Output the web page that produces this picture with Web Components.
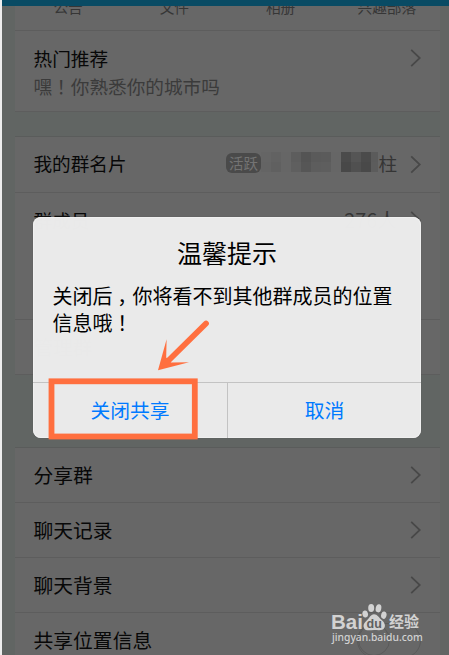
<!DOCTYPE html>
<html lang="zh-CN">
<head>
<meta charset="UTF-8">
<title>群资料</title>
<style>
  * { box-sizing: border-box; }
  body {
    margin: 0;
    width: 449px;
    height: 655px;
    overflow: hidden;
    background: #ededed;
    font-family: "Noto Sans CJK SC", "Liberation Sans", sans-serif;
    color: #080808;
  }
</style>
</head>
<body>
<group-settings>
  <tab-strip></tab-strip>
  <list-row style="--h: 81px; --size: 18.65px; --shift: 0.5px" arrow="-13">热门推荐
    <span slot="sub">嘿<mid-mark>！</mid-mark>你熟悉你的城市吗</span>
  </list-row>
  <list-gap style="--h: 25px"></list-gap>
  <list-row style="--h: 56px; --size: 18.6px; --shift: -2px" arrow="-0.5">我的群名片
    <name-tag slot="value"></name-tag>
  </list-row>
  <list-row style="--h: 127px; --size: 18.6px; --shift: -36px" arrow="-36">群成员
    <span slot="value" style="font-size: 19.8px">276人</span>
  </list-row>
  <list-row style="--h: 55px; --size: 19.7px">管理群</list-row>
  <list-gap style="--h: 73px"></list-gap>
  <list-row style="--h: 55px; --size: 19.8px" arrow="0">分享群</list-row>
  <list-row style="--h: 55px; --size: 19.8px" arrow="0">聊天记录</list-row>
  <list-row style="--h: 55px; --size: 19.8px" arrow="0">聊天背景</list-row>
  <list-row style="--h: 55px; --size: 19.8px">共享位置信息
    <toggle-switch slot="value"></toggle-switch>
  </list-row>
</group-settings>

<alert-dialog>
  <span slot="title">温馨提示</span>
  关闭后<mid-mark>，</mid-mark>你将看不到其他群成员的位置信息哦<mid-mark>！</mid-mark>
  <span slot="ok">关闭共享</span>
  <span slot="cancel">取消</span>
</alert-dialog>
<marker-arrow></marker-arrow>
<site-watermark></site-watermark>

<script>
// Small helper: every element gets an open root with its own markup
function define(name, html, setup) {
  customElements.define(name, class extends HTMLElement {
    connectedCallback() {
      if (this.shadowRoot) return;
      this.attachShadow({ mode: 'open' });
      this.shadowRoot.innerHTML = html.trim();
      if (setup) setup(this, this.shadowRoot);
    }
  });
}

// Punctuation centred in its full-width cell
define('mid-mark', `
  <style>:host { display: inline-block; width: 1em; text-indent: .24em; white-space: nowrap; line-height: 1; }</style><slot></slot>
`);

define('group-settings', `
  <style>
    :host {
      display: block;
      height: 655px;
      margin-left: 2px;
      overflow: hidden;
      background: #616563;
    }
    .bar { height: 6px; background: #094b64; }
    .list { width: 425px; margin-left: 13px; }
  </style>
  <div class="bar"></div>
  <div class="list"><slot></slot></div>
`);

define('tab-strip', `
  <style>
    :host {
      display: grid;
      grid-template-columns: repeat(4, 1fr);
      align-content: end;
      box-sizing: border-box;
      height: 25px;
      padding-bottom: 14px;
      overflow: hidden;
      text-align: center;
      font-size: 14.7px;
      line-height: 18px;
      color: #363636;
      background: #676767;
      border-bottom: 1px solid #5d5d5d;
    }
  </style>
  <span>公告</span><span>文件</span><span>相册</span><span>兴趣部落</span>
`);

define('list-gap', `
  <style>
    :host {
      display: block;
      box-sizing: border-box;
      height: var(--h);
      border-bottom: 1px solid #5a5c5b;
    }
  </style>
`);

define('list-row', `
  <style>
    :host {
      display: flex;
      align-items: center;
      box-sizing: border-box;
      height: var(--h);
      padding: 0 19px 0 18.5px;
      background: #676767;
      border-bottom: 1px solid #5d5d5d;
      font-size: var(--size);
      line-height: 28px;
    }
    .text { flex: 1; transform: translateY(var(--shift, 0)); white-space: nowrap; }
    .sub { display: block; color: #3b3b3b; }
    .value { color: #353535; margin-right: 13px; transform: translateY(var(--shift, 0)); }
    svg { width: 11px; height: 18px; fill: none; stroke: #484848; stroke-width: 1.8; }
  </style>
  <div class="text"><slot></slot><div class="sub"><slot name="sub"></slot></div></div>
  <div class="value"><slot name="value"></slot></div>
  <svg viewBox="0 0 11 18"><path d="M1.2 .8 9.8 9 1.2 17.2"/></svg>
`, (el, root) => {
  const arrow = root.querySelector('svg');
  if (el.hasAttribute('arrow')) {
    arrow.style.transform = `translateY(${el.getAttribute('arrow')}px)`;
  } else {
    arrow.remove();
    root.querySelector('.value').style.marginRight = 0;
  }
});

define('name-tag', `
  <style>
    :host { display: flex; align-items: center; }
    .badge {
      width: 35px;
      height: 20px;
      border-radius: 6px;
      background: #4a4a4a;
      color: #737373;
      font-size: 14.5px;
      line-height: 19px;
      text-align: center;
    }
    .mosaic { display: grid; grid-template-columns: repeat(11, 10px) 7px; height: 20px; margin: -2px 0 0 .5px; }
  </style>
  <span class="badge">活跃</span>
  <span class="mosaic"></span>
  <span>柱</span>
`, (el, root) => {
  const tones = [
    '#656565 #626262 #666666 #5d5d5d #545454 #5a5a5a #5b5b5b #666666 #4b4b4b #555555 #4b4b4b #5b5b5b',
    '#646464 #606060 #666666 #5f5f5f #565656 #5d5d5d #5e5e5e #666666 #484848 #505050 #494949 #5c5c5c'
  ].join(' ').split(' ');
  root.querySelector('.mosaic').innerHTML =
    tones.map(t => `<i style="background:${t}"></i>`).join('');
});

define('toggle-switch', `
  <style>
    :host {
      display: block;
      box-sizing: border-box;
      width: 64px;
      height: 35px;
      border: 1.5px solid #5a5a5a;
      border-radius: 18px;
    }
    i { display: block; width: 32px; height: 32px; border: 1.5px solid #5a5a5a; border-radius: 50%; box-sizing: border-box; }
  </style>
  <i></i>
`);

define('alert-dialog', `
  <style>
    :host {
      position: absolute;
      left: 33px;
      top: 217px;
      width: 388px;
      height: 221px;
      box-sizing: border-box;
      display: flex;
      flex-direction: column;
      border-radius: 8px;
      background: rgba(236, 236, 236, .99);
      box-shadow: inset 0 0 0 1px #f0f0f0, 0 0 1px #555;
      color: #000;
    }
    .title { padding-top: 18px; text-align: center; font-size: 25px; line-height: 34px; }
    .body { flex: 1; padding: 13px 14px 0 19.5px; font-size: 20px; line-height: 27px; }
    .buttons {
      display: grid;
      grid-template-columns: 194px 1fr;
      height: 56px;
      border-top: 1px solid #c3c3c3;
      box-sizing: border-box;
      color: #007aff;
      font-size: 19.8px;
      line-height: 54px;
      text-align: center;
    }
    .buttons div + div { border-left: 1px solid #c3c3c3; }
  </style>
  <div class="title"><slot name="title"></slot></div>
  <div class="body"><slot></slot></div>
  <div class="buttons">
    <div><slot name="ok"></slot></div>
    <div><slot name="cancel"></slot></div>
  </div>
`);

// Orange frame and arrow pointing at the left button
define('marker-arrow', `
  <style>
    :host { position: absolute; left: 40px; top: 310px; width: 170px; height: 135px; }
    svg { display: block; }
  </style>
  <svg width="170" height="135" viewBox="40 310 170 135">
    <rect x="51.5" y="381.3" width="143.3" height="55.2" fill="none" stroke="#ff6f3f" stroke-width="5.8"/>
    <path d="M206 323.5 168 361" stroke="#ff6f3f" stroke-width="5.8" stroke-linecap="round"/>
    <path d="M158 370.3 166.6 339.3 166.2 357.5 171 362.6 189 362.3Z" fill="#ff6f3f"/>
  </svg>
`);

define('site-watermark', `
  <style>
    :host {
      position: absolute;
      left: 331px;
      top: 601px;
      width: 92px;
      color: #d2d2d2;
      font-family: "Noto Sans", "Noto Sans CJK SC", sans-serif;
    }
    .logo { display: flex; align-items: flex-end; height: 30px; }
    .bai { width: 31px; font: bold 20.5px/18px "Liberation Sans", sans-serif; }
    .jy { margin-left: 2px; font: bold 15px/20px "Noto Sans CJK SC", sans-serif; white-space: nowrap; }
    .url { padding-left: 1px; font-size: 10.3px; font-weight: 500; line-height: 13px; white-space: nowrap; }
  </style>
  <div class="logo">
    <span class="bai">Bai</span>
    <svg width="25" height="29" viewBox="0 0 25 29" fill="#d2d2d2">
      <ellipse cx="3.2" cy="12" rx="2.8" ry="3.6" transform="rotate(-12 3.2 12)"/>
      <ellipse cx="9.2" cy="6" rx="3" ry="4.1"/>
      <ellipse cx="16.5" cy="6.3" rx="2.8" ry="4.1" transform="rotate(12 16.5 6.3)"/>
      <ellipse cx="21.8" cy="13.2" rx="2.7" ry="3.7" transform="rotate(12 21.8 13.2)"/>
      <path d="M12 12.2c3.4 0 4.9 3.4 7.4 5.5 3.6 2.9 4.1 5.8 3 8.1-1.6 3.3-6.3 2.2-10.3 2.2s-8 1.5-9.9-1.6c-1.5-2.6-.3-5.6 2.3-7.7 2.9-2.4 4-6.5 7.5-6.5Z"/>
      <text x="12.2" y="25.8" text-anchor="middle" font-family="Liberation Sans" font-size="12.5" font-weight="bold" fill="#5f5f5f">du</text>
    </svg>
    <span class="jy">经验</span>
  </div>
  <div class="url">jingyan.baidu.com</div>
`);
</script>
</body>
</html>
